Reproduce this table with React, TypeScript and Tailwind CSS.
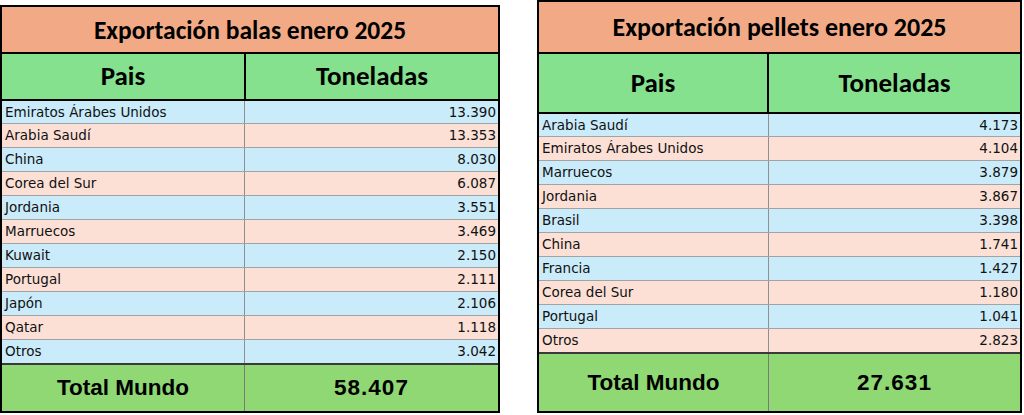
import React from "react";

const leftRows: [string, string][] = [
  ["Emiratos Árabes Unidos", "13.390"],
  ["Arabia Saudí", "13.353"],
  ["China", "8.030"],
  ["Corea del Sur", "6.087"],
  ["Jordania", "3.551"],
  ["Marruecos", "3.469"],
  ["Kuwait", "2.150"],
  ["Portugal", "2.111"],
  ["Japón", "2.106"],
  ["Qatar", "1.118"],
  ["Otros", "3.042"],
];

const rightRows: [string, string][] = [
  ["Arabia Saudí", "4.173"],
  ["Emiratos Árabes Unidos", "4.104"],
  ["Marruecos", "3.879"],
  ["Jordania", "3.867"],
  ["Brasil", "3.398"],
  ["China", "1.741"],
  ["Francia", "1.427"],
  ["Corea del Sur", "1.180"],
  ["Portugal", "1.041"],
  ["Otros", "2.823"],
];

const headFont = { fontFamily: "Carlito, 'Open Sans', 'Noto Sans', sans-serif" };
const dataFont = { fontFamily: "'DejaVu Sans', Verdana, sans-serif" };
const totalFont = { fontFamily: "'Liberation Sans', Arial, sans-serif" };

function Table({
  title,
  rows,
  side,
  titleH,
  headH,
  totalH,
  total,
  outerClass,
  titleSize,
}: {
  title: string;
  rows: [string, string][];
  side: "left" | "right";
  titleH: string;
  headH: string;
  totalH: string;
  total: string;
  outerClass: string;
  titleSize: string;
}) {
  const headCell = side === "left" ? "w-[244px]" : "w-[230px]";
  const dataCell = side === "left" ? "w-[243px]" : "w-[230px]";
  const last = rows.length - 1;
  return (
    <div className={`border-2 border-black bg-white ${outerClass}`}>
      <div
        className={`${titleH} flex items-center justify-center border-b-2 border-black bg-[#F2AA86] ${titleSize} font-bold text-black`}
        style={headFont}
      >
        {title}
      </div>
      <div className={`${headH} flex border-b-2 border-black bg-[#85E18D]`} style={headFont}>
        <div className={`${headCell} shrink-0 flex items-center justify-center border-r-2 border-black text-[27px] font-bold text-black`}>
          Pais
        </div>
        <div className="flex-1 flex items-center justify-center text-[27px] font-bold text-black">
          Toneladas
        </div>
      </div>
      {rows.map(([c, v], i) => (
        <div
          key={c}
          className={`flex ${i === 0 || i === last ? "h-[23px]" : "h-[24px]"} ${
            i < last ? "border-b border-[#a3a3a3]" : ""
          } ${i % 2 === 0 ? "bg-[#C9EBFA]" : "bg-[#FCE0D6]"} text-[13.5px] text-[#111]`}
          style={dataFont}
        >
          <div className={`${dataCell} shrink-0 flex items-center border-r border-[#8f8f8f] pl-[3px]`}>{c}</div>
          <div className="flex-1 flex items-center justify-end pr-[2px]">{v}</div>
        </div>
      ))}
      <div className={`${totalH} flex border-t-2 border-[#3a3a3a] bg-[#8FD873]`} style={totalFont}>
        <div className={`${dataCell} shrink-0 flex items-center justify-center border-r border-[#7a7a7a] text-[22.5px] font-bold text-black`}>
          Total Mundo
        </div>
        <div className="flex-1 flex items-center justify-center text-[22.5px] font-bold text-black tracking-[1px]">
          {total}
        </div>
      </div>
    </div>
  );
}

export default function App() {
  return (
    <div className="w-[1024px] h-[415px] bg-white flex items-start gap-[37px] overflow-hidden">
      <Table
        title="Exportación balas enero 2025"
        rows={leftRows}
        side="left"
        titleH="h-[47px] pt-[3px]"
        headH="h-[47px]"
        totalH="h-[48px]"
        total="58.407"
        outerClass="mt-[5px] w-[500px]"
        titleSize="text-[25.5px]"
      />
      <Table
        title="Exportación pellets enero 2025"
        rows={rightRows}
        side="right"
        titleH="h-[52px]"
        headH="h-[60px]"
        totalH="h-[59px]"
        total="27.631"
        outerClass="w-[485px]"
        titleSize="text-[26px]"
      />
    </div>
  );
}
